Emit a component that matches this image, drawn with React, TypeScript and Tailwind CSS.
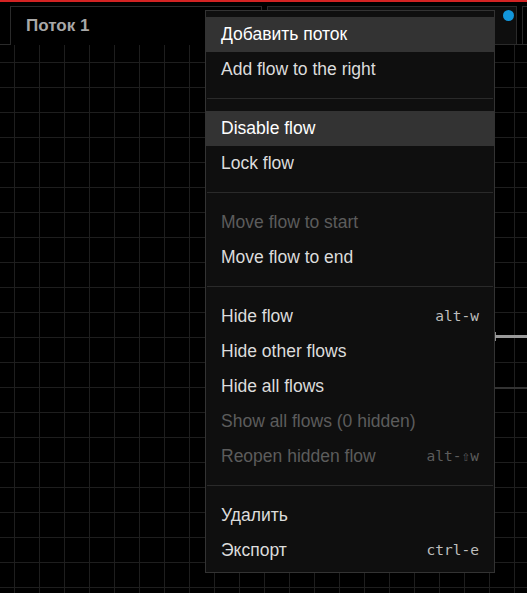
import type { ReactNode } from "react";

type MenuEntry =
  | { kind: "sep" }
  | {
      kind: "item";
      label: string;
      shortcut?: string;
      active?: boolean;
      disabled?: boolean;
    };

const menuEntries: MenuEntry[] = [
  { kind: "item", label: "Добавить поток", active: true },
  { kind: "item", label: "Add flow to the right" },
  { kind: "sep" },
  { kind: "item", label: "Disable flow", active: true },
  { kind: "item", label: "Lock flow" },
  { kind: "sep" },
  { kind: "item", label: "Move flow to start", disabled: true },
  { kind: "item", label: "Move flow to end" },
  { kind: "sep" },
  { kind: "item", label: "Hide flow", shortcut: "alt-w" },
  { kind: "item", label: "Hide other flows" },
  { kind: "item", label: "Hide all flows" },
  { kind: "item", label: "Show all flows (0 hidden)", disabled: true },
  { kind: "item", label: "Reopen hidden flow", shortcut: "alt-⇧w", disabled: true },
  { kind: "sep" },
  { kind: "item", label: "Удалить" },
  { kind: "item", label: "Экспорт", shortcut: "ctrl-e" },
];

function Tab({
  label,
  active,
  className,
}: {
  label?: string;
  active?: boolean;
  className?: string;
}) {
  return (
    <div
      className={
        active
          ? `relative -mb-px flex h-[39px] items-center border-x border-t border-[#2a2a2a] bg-black pl-[15px] ${className ?? ""}`
          : `relative flex h-[38px] items-center border-x border-t border-[#2a2a2a] bg-[#0e0e0e] pl-[15px] ${className ?? ""}`
      }
    >
      {label && (
        <span className="text-[17px] font-bold text-[#a8a8a8]">{label}</span>
      )}
      <span className="absolute right-[2px] top-[3px] h-[11px] w-[11px] rounded-full bg-[#1296db]" />
    </div>
  );
}

function MenuRow({
  entry,
}: {
  entry: Extract<MenuEntry, { kind: "item" }>;
}): ReactNode {
  const color = entry.disabled
    ? "text-[#5c5c5c]"
    : entry.active
      ? "text-white"
      : "text-[#dcdcdc]";
  return (
    <div
      className={`flex h-[35px] items-center justify-between px-[15px] ${entry.active ? "bg-[#333333]" : ""}`}
    >
      <span className={`-mt-px text-[17.5px] ${color}`}>{entry.label}</span>
      {entry.shortcut && (
        <span
          className={`font-['DejaVu_Sans_Mono',monospace] text-[14.5px] ${entry.disabled ? "text-[#5c5c5c]" : "text-[#bdbdbd]"}`}
        >
          {entry.shortcut}
        </span>
      )}
    </div>
  );
}

export default function App() {
  return (
    <div className="relative flex h-[593px] w-[527px] flex-col overflow-hidden bg-black font-['Liberation_Sans',Arial,sans-serif]">
      <div className="h-[2px] shrink-0 bg-[#d42323]" />

      <div className="flex h-[43px] shrink-0 items-end gap-[5px] border-b border-[#2a2a2a] bg-black pl-[10px]">
        <Tab label="Поток 1" active className="w-[252px] shrink-0" />
        <Tab className="w-[250px] shrink-0" />
        <div className="h-[38px] w-[20px] shrink-0 border-l border-t border-[#2a2a2a]" />
      </div>

      {/* canvas */}
      <div className="relative flex-1 bg-black bg-[linear-gradient(to_right,#1e1e1e_1px,transparent_1px),linear-gradient(to_bottom,#1e1e1e_1px,transparent_1px)] bg-[length:25px_25px] bg-[position:14px_17px]">
        <div className="absolute left-[494px] top-[287px] h-[9px] w-[2px] bg-[#8a8a8a]" />
        <div className="absolute left-[495px] top-[290px] h-[3px] w-[32px] bg-[#9a9a9a]" />
        <div className="absolute left-[494px] top-[342px] h-[2px] w-[33px] bg-[#333333]" />
      </div>

      {/* context menu */}
      <div className="absolute left-[205px] top-[10px] w-[290px] border border-[#333333] bg-[#0f0f0f] pb-[4px] pt-[6px]">
        {menuEntries.map((entry, i) =>
          entry.kind === "sep" ? (
            <div key={i} className="mx-px mb-[12px] mt-[11px] h-px bg-[#2a2a2a]" />
          ) : (
            <MenuRow key={i} entry={entry} />
          ),
        )}
      </div>
    </div>
  );
}
